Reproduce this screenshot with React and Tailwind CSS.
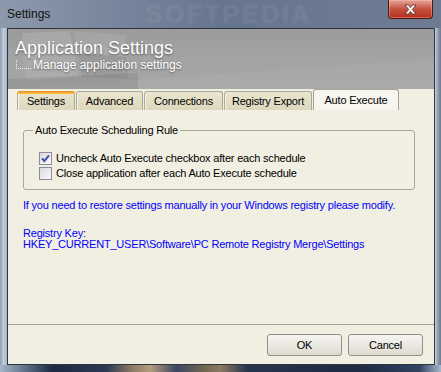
import React from "react";

function Check({ checked }) {
  return (
    <span className="w-[13px] h-[13px] border border-[#8a8d99] bg-gradient-to-br from-[#d9d9e0] to-[#fafafa] flex items-center justify-center shrink-0">
      {checked && (
        <svg width="9" height="9" viewBox="0 0 9 9">
          <path d="M1 4.3 L3.4 7 L8 1.3" stroke="#3b4f9a" strokeWidth="1.9" fill="none" />
        </svg>
      )}
    </span>
  );
}

const tabs = [
  { label: "Settings", w: "w-[58px]", sel: false, hot: true },
  { label: "Advanced", w: "w-[67px]", sel: false, hot: false },
  { label: "Connections", w: "w-[79px]", sel: false, hot: false },
  { label: "Registry Export", w: "w-[88px]", sel: false, hot: false },
  { label: "Auto Execute", w: "w-[86px]", sel: true, hot: false },
];

export default function App() {
  return (
    <div className="w-[441px] h-[372px] flex flex-col overflow-hidden bg-gradient-to-r from-[#9aa7ba] via-[#6f7e96] to-[#8794a8] font-['Liberation_Sans',Arial,sans-serif] text-[11px] text-black">
      {/* Title bar */}
      <div className="h-[28px] relative overflow-hidden flex items-start pl-[7px] pt-[7px] bg-gradient-to-r from-[#8c99ad] via-[#66758e] to-[#6e7c93] shrink-0">
        <span className="text-[12px] leading-[14px] text-[#111]">Settings</span>
        <span className="absolute left-[145px] top-0 text-[26px] font-bold tracking-[2px] text-white/[0.07] leading-[28px] blur-[1px]">
          SOFTPEDIA
        </span>
        <div className="absolute left-[388px] top-0 w-[45px] h-[19px] rounded-b-[4px] border border-t-0 border-[#4a1a14] bg-gradient-to-b from-[#e6a79c] via-[#c4503f] to-[#b8301c] flex items-center justify-center shadow-[inset_0_0_0_1px_rgba(255,200,190,0.35)]">
          <svg width="13" height="11" viewBox="0 0 13 11">
            <path
              d="M1 1 H4.5 L6.5 3.6 L8.5 1 H12 L8.3 5.5 L12 10 H8.5 L6.5 7.4 L4.5 10 H1 L4.7 5.5 Z"
              fill="#fff"
              stroke="#5a2a24"
              strokeWidth="0.8"
            />
          </svg>
        </div>
      </div>

      {/* Middle */}
      <div className="flex flex-1 min-h-0">
        <div className="w-[7px] bg-gradient-to-r from-[#8f9cb0] via-[#c1ccda] to-[#aab6c7]" />
        <div className="w-[428px] border border-[#2f3540] flex flex-col">
          {/* Header */}
          <div className="h-[60px] relative overflow-hidden bg-gradient-to-b from-[#9b9b9b] via-[#a3a3a3] to-[#a6a6a6] pl-[7px] pt-[10px] shrink-0">
            <svg className="absolute left-0 top-0" width="426" height="60" viewBox="0 0 426 60">
              <polygon points="0,60 426,30 426,60" fill="#ffffff" opacity="0.05" />
              <polygon points="14,4 62,2 66,24 16,28" fill="#ffffff" opacity="0.12" />
              <polygon points="66,2 118,6 118,28 70,24" fill="#ffffff" opacity="0.09" />
              <polygon points="16,28 66,24 70,48 18,52" fill="#ffffff" opacity="0.08" />
              <polygon points="70,24 118,28 120,50 74,48" fill="#000000" opacity="0.05" />
              <polygon points="0,50 130,44 130,60 0,60" fill="#000000" opacity="0.08" />
            </svg>
            <div className="relative text-white text-[18px] leading-[19px] [text-shadow:0_1px_2px_rgba(0,0,0,0.45)]">
              Application Settings
            </div>
            <div className="relative flex items-start">
              <svg width="18" height="14" viewBox="0 0 18 14" className="shrink-0">
                <g fill="#ffffff" opacity="0.85">
                  <rect x="1" y="2" width="1" height="1" />
                  <rect x="1" y="4" width="1" height="1" />
                  <rect x="1" y="6" width="1" height="1" />
                  <rect x="1" y="8" width="1" height="1" />
                  <rect x="1" y="10" width="1" height="1" />
                  <rect x="3" y="10" width="1" height="1" />
                  <rect x="5" y="10" width="1" height="1" />
                  <rect x="7" y="10" width="1" height="1" />
                  <rect x="9" y="10" width="1" height="1" />
                  <rect x="11" y="10" width="1" height="1" />
                  <rect x="13" y="10" width="1" height="1" />
                  <rect x="15" y="10" width="1" height="1" />
                </g>
              </svg>
              <span className="text-white text-[12px] leading-[14px] [text-shadow:0_1px_2px_rgba(0,0,0,0.45)]">
                Manage application settings
              </span>
            </div>
          </div>

          {/* Body */}
          <div className="flex-1 flex flex-col bg-[#f1efe2] tracking-[-0.2px]">
            <div className="h-[235px] flex flex-col shrink-0">
              {/* Tabs */}
              <div className="h-[21px] flex items-end gap-[1px] pl-[9px] shrink-0">
                {tabs.map((t) =>
                  t.sel ? (
                    <div
                      key={t.label}
                      className={`${t.w} h-[21px] rounded-t-[3px] border border-b-0 border-[#a5a497] bg-[#f6f5ee] flex items-center justify-center leading-[13px]`}
                    >
                      {t.label}
                    </div>
                  ) : (
                    <div
                      key={t.label}
                      className={`${t.w} h-[19px] rounded-t-[3px] border border-b-0 border-[#a9a89a] bg-gradient-to-b from-[#e9e5cf] to-[#ddd8bc] flex items-center justify-center leading-[13px] relative shadow-[inset_1px_0_0_#f7f5ea]`}
                    >
                      {t.hot && (
                        <span className="absolute left-[-1px] right-[-1px] top-[-1px] h-[3px] rounded-t-[3px] bg-gradient-to-b from-[#e68b2c] to-[#ffc73c]" />
                      )}
                      {t.label}
                    </div>
                  )
                )}
              </div>

              {/* Panel */}
              <div className="flex-1 pl-[15px]">
                <fieldset className="mt-[13px] w-[392px] border border-[#a9a89a] rounded-[3px] pb-[8px]">
                  <legend className="ml-[9px] px-[2px] leading-[14px]">Auto Execute Scheduling Rule</legend>
                  <div className="pt-[14px] pl-[15px] flex flex-col">
                    <div className="h-[15px] flex items-center gap-[4px]">
                      <Check checked />
                      <span className="leading-[13px]">Uncheck Auto Execute checkbox after each schedule</span>
                    </div>
                    <div className="h-[15px] flex items-center gap-[4px]">
                      <Check />
                      <span className="leading-[13px]">Close application after each Auto Execute schedule</span>
                    </div>
                  </div>
                </fieldset>
                <div className="mt-[9px] text-[#0000ff]">
                  <div className="leading-[13px]">
                    If you need to restore settings manually in your Windows registry please modify.
                  </div>
                  <div className="mt-[16px] leading-[11px]">Registry Key:</div>
                  <div className="leading-[11px]">
                    HKEY_CURRENT_USER\Software\PC Remote Registry Merge\Settings
                  </div>
                </div>
              </div>
            </div>

            <div className="h-[1px] bg-[#a0a0a0] shrink-0" />

            {/* Buttons */}
            <div className="flex-1 flex justify-end items-start gap-[6px] pt-[9px] pr-[11px]">
              <button className="w-[75px] h-[22px] rounded-[3px] border border-[#8e8f8f] bg-gradient-to-b from-[#f6f5f2] via-[#ece9e2] to-[#ddd9d0] leading-[13px] text-black">
                OK
              </button>
              <button className="w-[75px] h-[22px] rounded-[3px] border border-[#8e8f8f] bg-gradient-to-b from-[#f6f5f2] via-[#ece9e2] to-[#ddd9d0] leading-[13px] text-black">
                Cancel
              </button>
            </div>
          </div>
        </div>
        <div className="w-[6px] bg-gradient-to-r from-[#c9d2de] via-[#8e9bae] to-[#6f7c90]" />
      </div>

      {/* Bottom frame */}
      <div className="h-[7px] shrink-0 bg-[linear-gradient(to_right,#a7b6c9_0%,#5b6c86_6%,#1c2a42_12%,#2a3854_24%,#8b7a62_30%,#b49d7c_34%,#3b4660_40%,#6f6452_46%,#8b7a62_50%,#26344e_56%,#1c2a42_80%,#304260_95%,#a7b6c9_100%)]" />
    </div>
  );
}
